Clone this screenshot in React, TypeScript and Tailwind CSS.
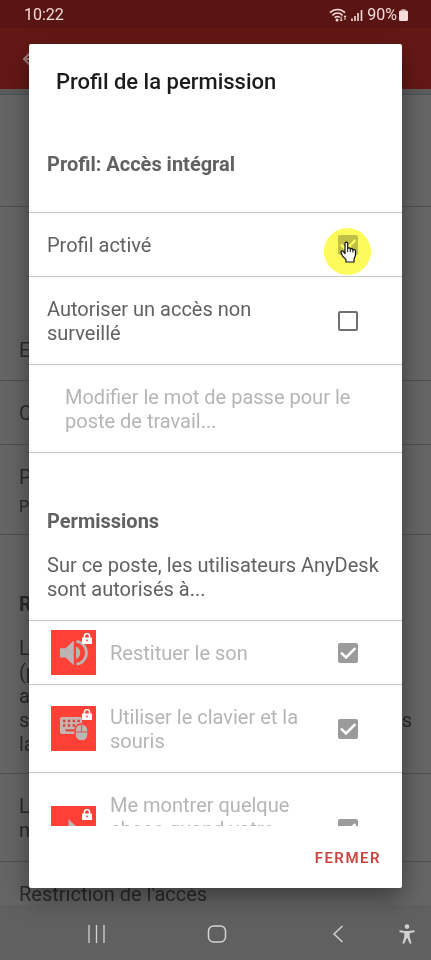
import type { ReactNode } from "react";
import { ArrowLeft } from "lucide-react";

type CheckProps = { id: string; checked?: boolean; disabled?: boolean; faded?: boolean };

const Check = ({ id, checked, disabled, faded }: CheckProps) => (
  <span className={faded ? "grid size-5 opacity-60" : "grid size-5"}>
    <input
      id={id}
      type="checkbox"
      defaultChecked={checked}
      disabled={disabled}
      className="col-start-1 row-start-1 size-5 appearance-none rounded-xs border-2 border-[#707070] checked:border-[#9b9b9b] checked:bg-[#9b9b9b]"
    />
    {checked && (
      <svg viewBox="0 0 20 20" className="pointer-events-none col-start-1 row-start-1 size-5" fill="none">
        <path d="M3 9.6 8 14.4 17.3 5.2" stroke="#fff" strokeWidth="2.5" />
      </svg>
    )}
  </span>
);

const Lock = () => (
  <svg viewBox="0 0 10 11" className="absolute top-[3px] right-1 h-[11px] w-2.5">
    <path d="M2.4 5V3.2a2.6 2.6 0 0 1 5.2 0V5" fill="none" stroke="#fff" strokeWidth="1.5" />
    <rect x="0" y="4.4" width="10" height="6.6" rx="0.8" fill="#fff" />
    <circle cx="5" cy="7.4" r="0.9" fill="#ff4036" />
  </svg>
);

const SoundIcon = () => (
  <svg viewBox="0 0 45 45" className="size-full">
    <path d="M9 18.2h5.5l8.3-7.6v24.6l-8.3-7.6H9z" fill="#bdb4b4" />
    <path d="M25 16.5a6.8 6.800 0 0 1 0 12.600z" fill="#bdb4b4" />
    <path d="M25.5 11.4a11.500 11.500 0 0 1 0 22.800" fill="none" stroke="#bdb4b4" strokeWidth="2.8" />
  </svg>
);

const KeyboardIcon = () => (
  <svg viewBox="0 0 45 45" className="size-full">
    <rect x="9" y="11" width="22" height="17" rx="2" fill="#c9b3b1" />
    <path d="M12 15h17M12 19.5h17" stroke="#d2443c" strokeWidth="2.4" strokeDasharray="2.4 2.4" />
    <path d="M14.5 24.4h9" stroke="#d2443c" strokeWidth="2" />
    <rect x="24" y="18" width="13" height="17" rx="6" fill="#bdb4b4" stroke="#ff4036" strokeWidth="1.6" />
    <path d="M24.5 26h12M30.5 18.5V26" stroke="#e0574f" strokeWidth="1.1" />
  </svg>
);

const PointerIcon = () => (
  <svg viewBox="0 0 45 45" className="size-full">
    <path d="M17.5 13v21l5-5 3.3 7.5 3.6-1.6-3.3-7.3h6.4z" fill="#bdb4b4" />
  </svg>
);

type PermissionProps = { id: string; icon: ReactNode; children: ReactNode; tall?: boolean };

const Permission = ({ id, icon, children, tall }: PermissionProps) => (
  <div
    className={
      tall
        ? "flex min-h-28 items-center border-t border-[#c6c6c6] pr-11 pl-[22px]"
        : "flex items-center border-t border-[#c6c6c6] pr-11 pl-[22px]"
    }
  >
    <div className="relative size-[45px] shrink-0 bg-[#ff4036]">
      {icon}
      <Lock />
    </div>
    <label htmlFor={id} className="flex-1 self-start pt-5 pr-2 pb-[19px] pl-3.5 text-[#b5b5b5]">
      {children}
    </label>
    <Check id={id} checked disabled />
  </div>
);

const HandCursor = () => (
  <svg viewBox="0 0 17 22" className="absolute top-1.5 left-0.5 h-[22px] w-[17px]">
    <path
      d="M6 21v-2.4L2.4 14.8 1 11.3c-.3-1.3 1.4-1.9 2.2-.9L5 12.5V2.4C5 .6 7.7.6 7.7 2.4v5c.9-.9 2.4-.5 2.6.6.9-.8 2.4-.4 2.6.8 1-.7 2.6-.1 2.6 1.3v4.3L14 18.2V21z"
      fill="#fff"
      stroke="#111"
      strokeWidth="1.2"
      strokeLinejoin="round"
    />
    <path d="M7.7 7v4M10.3 8v3.2M12.9 9v2.6" stroke="#111" strokeWidth="1" />
  </svg>
);

const StatusBar = () => (
  <div className="flex h-7 shrink-0 items-center justify-between bg-[#591513] pt-0.5 pr-[23px] pl-6 text-base text-[#f3dcda]">
    <span>10:22</span>
    <div className="flex items-center gap-1">
      <svg viewBox="0 0 18 14" className="h-3.5 w-[18px]" fill="none" stroke="currentColor" strokeWidth="1.6">
        <path d="M1 4.6C5.3.4 11.7.4 16 4.6" />
        <path d="M3.4 7.3c3-2.9 7.2-2.9 10.2 0" />
        <path d="M5.7 9.7c1.7-1.5 3.6-1.5 5.2-.2" />
        <circle cx="8" cy="12" r="0.7" fill="currentColor" />
        <path d="M12.2 8.5V13M10.9 11.700l1.300 1.300 1.300-1.300M16 12V7.800M14.900 9 16 7.800 17.100 9" strokeWidth="1" />
      </svg>
      <svg viewBox="0 0 12 11" className="h-[11px] w-3" stroke="currentColor" strokeWidth="1.6">
        <path d="M1 11V8.5M4 11V6M7 11V3M10.500 11V0" />
      </svg>
      <div className="flex items-center gap-0.5">
        <span>90%</span>
        <svg viewBox="0 0 9 12" className="h-3 w-[9px]" fill="currentColor">
          <rect x="2.5" y="0" width="4" height="3" opacity="0.6" />
          <rect x="0" y="1.5" width="9" height="10.5" rx="1.5" />
        </svg>
      </div>
    </div>
  </div>
);

const NavBar = () => (
  <nav className="flex h-[55px] shrink-0 items-center bg-[#606060] pt-0.5 pr-4 pl-[87px] text-[#d2d2d2]">
    <div className="flex flex-1 items-center justify-between">
      <button aria-label="Applications récentes">
        <svg viewBox="0 0 18 18" className="size-[18px]" stroke="currentColor" strokeWidth="1.3">
          <path d="M2 0v18M9.5 0v18M17 0v18" />
        </svg>
      </button>
      <button aria-label="Accueil" className="pr-1">
        <svg viewBox="0 0 20 18" className="h-[18px] w-5" fill="none" stroke="currentColor" strokeWidth="1.5">
          <rect x="1.5" y="1" width="17" height="16" rx="5" />
        </svg>
      </button>
      <button aria-label="Retour">
        <svg viewBox="0 0 12 18" className="h-[18px] w-3" fill="none" stroke="currentColor" strokeWidth="1.5">
          <path d="M10.5 1 2 9l8.5 8" />
        </svg>
      </button>
    </div>
    <button aria-label="Accessibilité" className="ml-[55px]">
      <svg viewBox="0 0 16 20" className="h-5 w-4" fill="currentColor">
        <circle cx="8" cy="2.6" r="2.3" />
        <path d="M.5 6.3 6 7h4l5.5-.7v1.9L10.7 9v4l1.9 6.3-1.8.5L8.3 14h-.6l-2.5 5.800-1.800-.5L5.300 13V9L.5 8.200z" />
      </svg>
    </button>
  </nav>
);

// Settings screen, dimmed behind the dialog
const SettingsPage = () => (
  <main className="min-h-0 flex-1 overflow-hidden bg-[#656565] text-xl/6 text-[#2b2b2b]">
    <header className="flex h-[61px] items-center bg-[#641815] px-[19px] text-[#a17c7a]">
      <ArrowLeft size={24} />
    </header>
    <div className="h-[6px] border-b border-[#46545a] bg-[#5c5c5c]" />
    <div className="h-28 border-b border-[#505050]" />
    <div className="flex h-[174px] items-end border-b border-[#505050] px-[19px] pb-[18px]">E</div>
    <div className="flex h-16 items-center border-b border-[#505050] px-[19px]">C</div>
    <div className="flex h-[90px] flex-col justify-center gap-1.5 border-b border-[#505050] px-[19px] pt-1">
      <span>P</span>
      <span className="text-base/6">P</span>
    </div>
    <div className="h-[239px] border-b border-[#505050] px-[19px] pt-[57px]">
      <h2 className="font-bold">R</h2>
      <div className="pt-5">
        <div>L</div>
        <div>(p</div>
        <div>a</div>
        <div className="flex justify-between">
          <span>s</span>
          <span>s</span>
        </div>
        <div>la</div>
      </div>
    </div>
    <div className="flex h-[88px] flex-col justify-center border-b border-[#505050] px-[19px]">
      <span>L</span>
      <span>m</span>
    </div>
    <div className="px-[19px] pt-5">Restriction de l'accès</div>
  </main>
);

const PermissionDialog = () => (
  <div
    role="dialog"
    aria-labelledby="title"
    className="pointer-events-auto flex min-h-0 flex-1 flex-col rounded-xs bg-white text-xl/6 text-[#616161] shadow-[0_10px_24px_rgba(0,0,0,0.4)]"
  >
    <h1 id="title" className="px-[27px] pt-6 pb-5 text-[22px]/7 font-medium text-[#1c1c1c]">
      Profil de la permission
    </h1>
    <div className="min-h-0 flex-1 overflow-hidden">
      <h2 className="px-[18px] py-9 font-bold">Profil: Accès intégral</h2>
      <div className="flex items-center border-t border-[#c6c6c6] pt-5 pr-11 pb-[19px] pl-[18px]">
        <label htmlFor="enabled" className="flex-1">
          Profil activé
        </label>
        <div className="relative">
          <Check id="enabled" checked faded />
          <span className="pointer-events-none absolute -top-[7px] -left-3.5 size-[47px] rounded-full bg-[#fdfb5c] mix-blend-multiply" />
          <HandCursor />
        </div>
      </div>
      <div className="flex items-center border-t border-[#c6c6c6] pt-5 pr-11 pb-[19px] pl-[18px]">
        <label htmlFor="unattended" className="flex-1 pr-6">
          Autoriser un accès non surveillé
        </label>
        <Check id="unattended" />
      </div>
      <div className="border-y border-[#c6c6c6]">
        <button disabled className="px-9 pt-5 pb-[19px] text-left text-[#b5b5b5]">
          Modifier le mot de passe pour le poste de travail...
        </button>
      </div>
      <h2 className="px-[18px] pt-14 pb-5 font-bold">Permissions</h2>
      <p className="px-[18px] pb-[19px]">Sur ce poste, les utilisateurs AnyDesk sont autorisés à...</p>
      <Permission id="sound" icon={<SoundIcon />}>
        Restituer le son
      </Permission>
      <Permission id="keyboard" icon={<KeyboardIcon />}>
        Utiliser le clavier et la souris
      </Permission>
      <Permission id="pointer" icon={<PointerIcon />} tall>
        Me montrer quelque chose quand votre
      </Permission>
    </div>
    <div className="flex h-[62px] shrink-0 items-center justify-end pt-0.5 pr-[21px]">
      <button className="text-[15px]/6 font-semibold tracking-widest text-[#cb4540]">FERMER</button>
    </div>
  </div>
);

export default function App() {
  return (
    <div className="relative flex h-screen flex-col overflow-hidden font-[Roboto,sans-serif]">
      <StatusBar />
      <SettingsPage />
      <NavBar />
      <div className="pointer-events-none absolute inset-0 flex flex-col px-[29px] pt-11 pb-[72px]">
        <PermissionDialog />
      </div>
    </div>
  );
}
